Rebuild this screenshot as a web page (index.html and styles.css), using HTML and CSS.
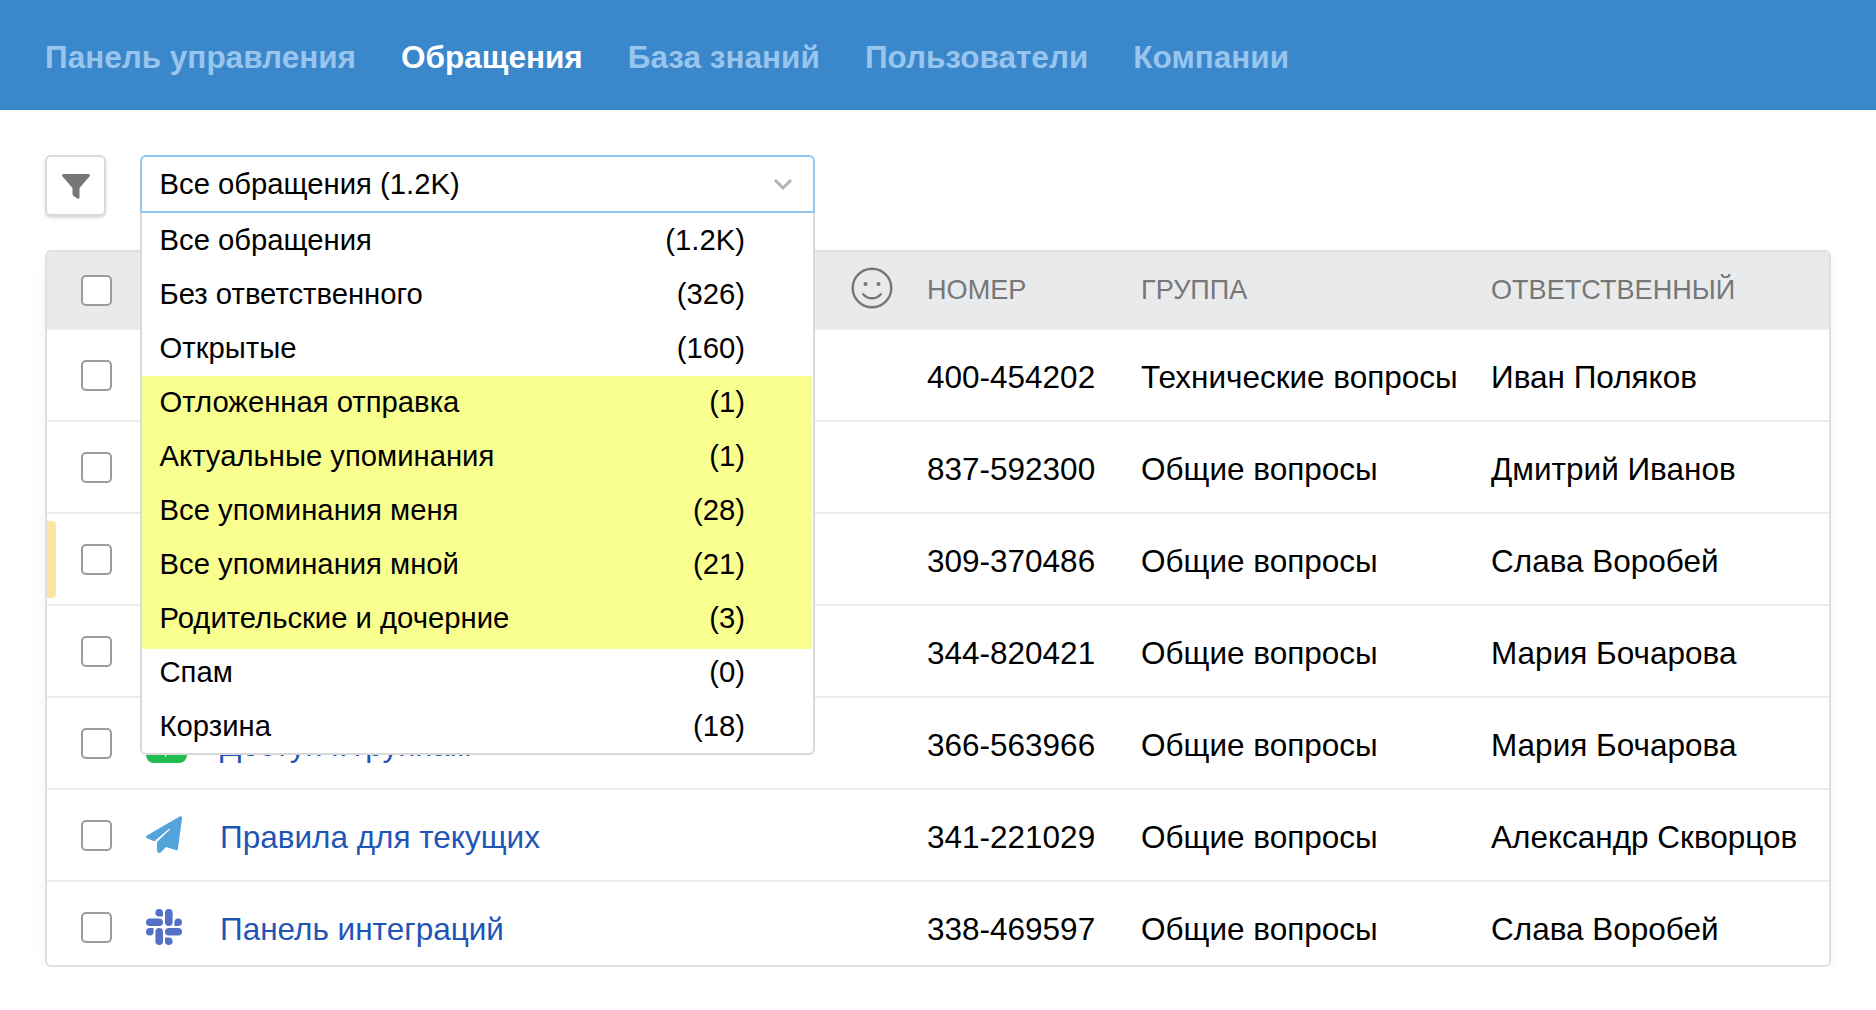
FILE: index.html
```html
<!DOCTYPE html>
<html lang="ru">
<head>
<meta charset="utf-8">
<title>Обращения</title>
<link rel="stylesheet" href="styles.css">
</head>
<body>
<nav class="topbar">
  <a class="nav-item">Панель управления</a>
  <a class="nav-item active">Обращения</a>
  <a class="nav-item">База знаний</a>
  <a class="nav-item">Пользователи</a>
  <a class="nav-item">Компании</a>
</nav>
<main class="content">
  <div class="toolbar">
    <button class="filter-btn" aria-label="Фильтр">
      <svg width="28" height="25" viewBox="0 0 28 25"><path d="M1.500 0h25c1.300 0 1.900 1.500 1 2.500L17.500 14v9.500c0 1.200-1.200 1.700-2.100 1L11.300 21.800c-.5-.4-.8-.9-.8-1.500V14L.5 2.500C-.4 1.500.2 0 1.500 0z" fill="#777"/></svg>
    </button>
    <div class="select">
      <div class="select-box">
        <span>Все обращения (1.2K)</span>
        <svg width="20" height="13" viewBox="0 0 20 13"><path d="M2 2l8 8 8-8" fill="none" stroke="#b3b3b3" stroke-width="3"/></svg>
      </div>
      <ul class="menu">
        <li><span>Все обращения</span><span>(1.2K)</span></li>
        <li><span>Без ответственного</span><span>(326)</span></li>
        <li><span>Открытые</span><span>(160)</span></li>
        <li><span>Отложенная отправка</span><span>(1)</span></li>
        <li><span>Актуальные упоминания</span><span>(1)</span></li>
        <li><span>Все упоминания меня</span><span>(28)</span></li>
        <li><span>Все упоминания мной</span><span>(21)</span></li>
        <li><span>Родительские и дочерние</span><span>(3)</span></li>
        <li><span>Спам</span><span>(0)</span></li>
        <li><span>Корзина</span><span>(18)</span></li>
      </ul>
    </div>
  </div>
  <section class="table">
    <div class="row head">
      <i class="check"></i><span></span><span></span>
      <svg class="smile" width="42" height="42" viewBox="0 0 42 42"><circle cx="21" cy="21" r="19.300" fill="none" stroke="#777" stroke-width="2.400"/><circle cx="14.500" cy="17" r="2" fill="#777"/><circle cx="27.500" cy="17" r="2" fill="#777"/><path d="M12.200 27.200c4.400 5.400 13.200 5.400 17.600 0" fill="none" stroke="#777" stroke-width="2.400" stroke-linecap="round"/></svg>
      <span>НОМЕР</span><span>ГРУППА</span><span>ОТВЕТСТВЕННЫЙ</span>
    </div>
    <div class="row"><i class="check"></i><span></span><span></span><span></span><span>400-454202</span><span>Технические вопросы</span><span>Иван Поляков</span></div>
    <div class="row"><i class="check"></i><span></span><span></span><span></span><span>837-592300</span><span>Общие вопросы</span><span>Дмитрий Иванов</span></div>
    <div class="row marked"><i class="check"></i><span></span><span></span><span></span><span>309-370486</span><span>Общие вопросы</span><span>Слава Воробей</span></div>
    <div class="row"><i class="check"></i><span></span><span></span><span></span><span>344-820421</span><span>Общие вопросы</span><span>Мария Бочарова</span></div>
    <div class="row"><i class="check"></i>
      <svg class="icon" width="41" height="41" viewBox="0 0 41 41"><rect width="41" height="41" rx="8" fill="#22bb4f"/><path d="M8 18a12.500 10 0 1 1 17.500 9.200L19 35.200V28A12 10 0 0 1 8 18z" fill="#fff"/></svg>
      <a class="subject">Доступ к группам</a><span></span><span>366-563966</span><span>Общие вопросы</span><span>Мария Бочарова</span></div>
    <div class="row"><i class="check"></i>
      <svg class="icon" width="36" height="37" viewBox="0 0 36 37"><path d="M33.600.5C35 -.3 36.300.6 36.100 2.200L32 32.200c-.2 1.700-1.300 2.400-2.800 1.900L19.900 31l-4.700 5c-1.700 1.700-4.200.8-4.200-1.500v-7.300c0-.9.3-1.600.9-2.300L23.600 13.800c.6-.6-.1-1.300-.8-.8L9.200 24.600c-.6.6-1.300.6-2 .3L1 22.200c-1.300-.6-1.300-2.100-.1-2.800z" fill="#52a4db"/></svg>
      <a class="subject">Правила для текущих</a><span></span><span>341-221029</span><span>Общие вопросы</span><span>Александр Скворцов</span></div>
    <div class="row last"><i class="check"></i>
      <svg class="icon" width="36" height="36" viewBox="0 0 36 36" fill="#5470c6"><rect x="19" y="0" width="7.600" height="17" rx="3.800"/><rect x="0" y="9.400" width="17" height="7.600" rx="3.800"/><rect x="9.400" y="19" width="7.600" height="17" rx="3.800"/><rect x="19" y="19" width="17" height="7.600" rx="3.800"/><path d="M17 7.600h-3.800a3.800 3.800 0 1 1 3.800-3.800zM28.400 17v-3.800a3.800 3.800 0 1 1 3.800 3.800zM19 28.400h3.800a3.800 3.800 0 1 1-3.800 3.800zM7.600 19v3.800a3.800 3.800 0 1 1-3.800-3.800z"/></svg>
      <a class="subject">Панель интеграций</a><span></span><span>338-469597</span><span>Общие вопросы</span><span>Слава Воробей</span></div>
  </section>
</main>
</body>
</html>
```
FILE: styles.css
```css
* { box-sizing: border-box; }
body {
  margin: 0;
  background: #fff;
  color: #000;
  font-family: "Liberation Sans", Arial, sans-serif;
  font-size: 31.5px;
}
.topbar {
  display: flex;
  align-items: center;
  gap: 45.1px;
  height: 110px;
  padding: 4px 45px 0;
  background: #3b87cb;
}
.nav-item { font-weight: 700; color: #97c5ed; white-space: nowrap; }
.nav-item.active { color: #fff; }
.content { padding: 45px 45px 0; }
.toolbar { display: flex; gap: 34px; height: 95px; align-items: flex-start; }
.filter-btn {
  display: flex;
  align-items: center;
  justify-content: center;
  width: 61px;
  height: 61px;
  padding: 2px 0 0;
  border: 2px solid #dadada;
  border-radius: 6px;
  background: #fff;
  box-shadow: 0 2px 3px rgba(0, 0, 0, .15);
}
.select { position: relative; width: 675px; font-size: 29.25px; }
.select-box {
  display: flex;
  align-items: center;
  justify-content: space-between;
  height: 58px;
  padding: 0 20px 0 17.5px;
  border: 2px solid #93c7ef;
  border-radius: 6px 6px 0 0;
}
.menu {
  position: absolute;
  z-index: 2;
  top: 58px;
  left: 0;
  width: 675px;
  margin: 0;
  padding: 0;
  list-style: none;
  border: 2px solid #d9d9d9;
  border-top: 0;
  border-radius: 0 0 6px 6px;
  background: linear-gradient(#f9ff8f, #f9ff8f) 0 163px / 670px 273px no-repeat #fff;
}
.menu li {
  display: flex;
  align-items: center;
  justify-content: space-between;
  height: 54px;
  padding: 0 68px 0 17.5px;
}
.table {
  width: 1786px;
  border: 2px solid #dfdfdf;
  border-radius: 6px;
  overflow: hidden;
  box-shadow: 0 6px 14px rgba(0, 0, 0, .05);
}
.row {
  position: relative;
  display: grid;
  grid-template-columns: 65px 74px 631px 76px 214px 350px 1fr;
  align-items: center;
  height: 92px;
  padding-left: 34px;
  border-bottom: 2px solid #ebebeb;
  white-space: nowrap;
}
.row > span, .subject { padding-top: 4px; }
.row.head { height: 78px; background: #e9eaec; color: #777; font-size: 27.1px; }
.row.head > span { padding-top: 0; }
.row.last { height: 83px; border-bottom: 0; padding-top: 7px; }
.row.marked::before {
  content: "";
  position: absolute;
  left: 0;
  top: 7px;
  width: 9px;
  height: 77px;
  border-radius: 0 4px 4px 0;
  background: #fde3a4;
}
.check { width: 31px; height: 31px; border: 2px solid #9b9b9b; border-radius: 5px; background: #fff; }
.smile { margin-bottom: 5px; }
.icon { margin-bottom: 1px; }
.subject { color: #1f55b5; }
```
